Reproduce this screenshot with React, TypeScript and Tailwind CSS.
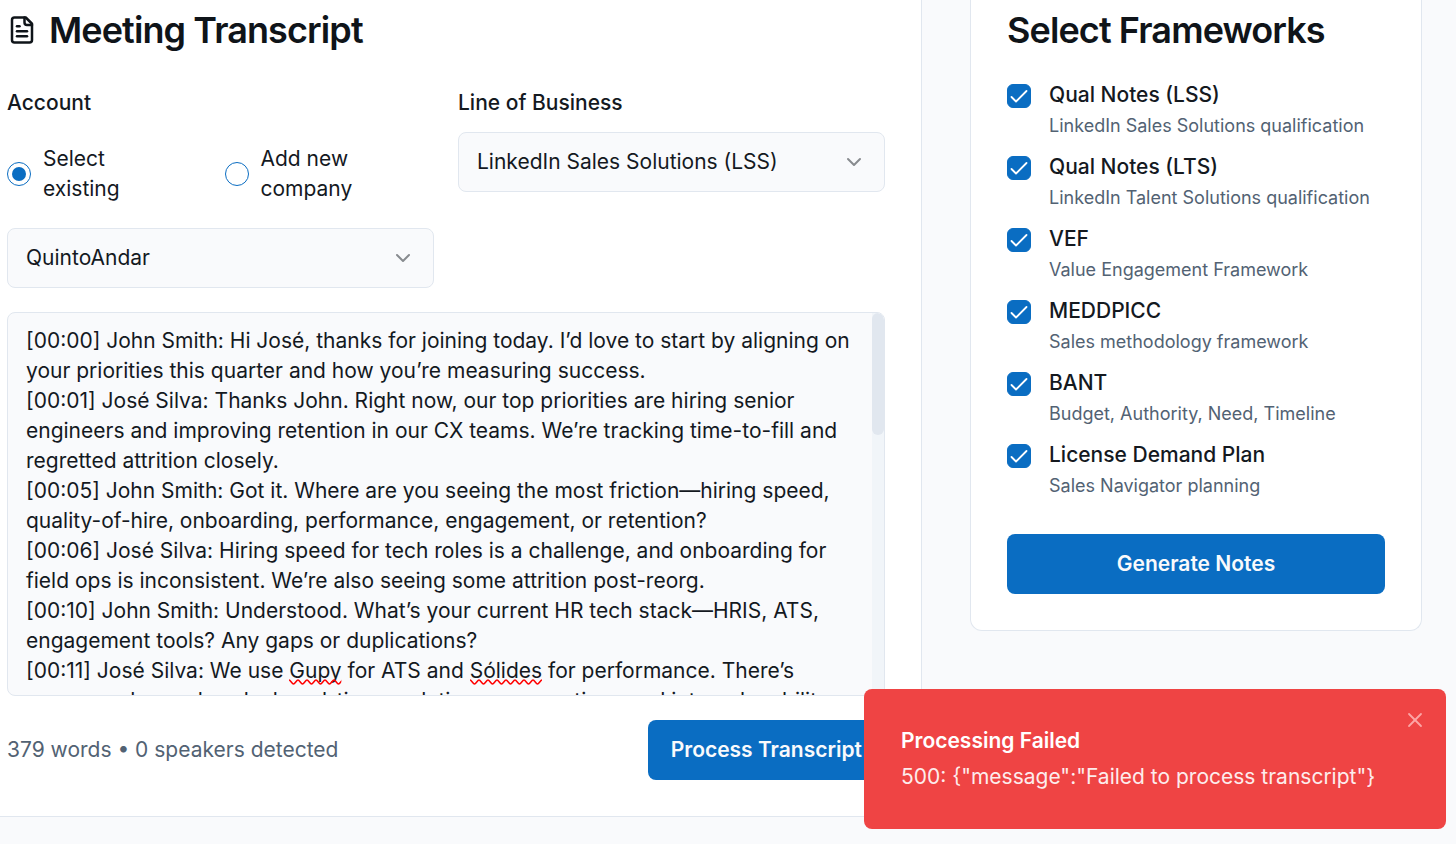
import React, { useEffect, useRef, useState } from "react";
import { ChevronDown, X } from "lucide-react";

const TRANSCRIPT = `[00:00] John Smith: Hi José, thanks for joining today. I’d love to start by aligning on your priorities this quarter and how you’re measuring success.
[00:01] José Silva: Thanks John. Right now, our top priorities are hiring senior engineers and improving retention in our CX teams. We’re tracking time-to-fill and regretted attrition closely.
[00:05] John Smith: Got it. Where are you seeing the most friction—hiring speed, quality-of-hire, onboarding, performance, engagement, or retention?
[00:06] José Silva: Hiring speed for tech roles is a challenge, and onboarding for field ops is inconsistent. We’re also seeing some attrition post-reorg.
[00:10] John Smith: Understood. What’s your current HR tech stack—HRIS, ATS, engagement tools? Any gaps or duplications?
[00:11] José Silva: We use Gupy for ATS and Sólides for performance. There’s some overlap and we lack real-time analytics on promotions and internal mobility.
[00:15] John Smith: How are you planning headcount for the next two quarters, and who signs off on new tools?
[00:16] José Silva: We expect about sixty engineering hires and one hundred in operations. Our CHRO and CFO approve anything above the annual budget, and procurement runs the review.
[00:20] John Smith: What would a successful outcome look like by the end of the year?
[00:21] José Silva: Time-to-fill under forty days for senior roles, regretted attrition below eight percent, and one shared view of skills across the company.
[00:25] John Smith: Which alternatives are you evaluating at the moment?
[00:26] José Silva: Two local vendors, and an internal build. We need a decision before the budget cycle closes in October, so the timeline is tight.
[00:30] John Smith: Who else should be part of the next conversation?
[00:31] José Silva: Our head of talent acquisition and the people analytics lead. They own the day-to-day process and the reporting.
[00:35] John Smith: I will send a summary with the next steps and a proposed agenda for the workshop.
[00:36] José Silva: Perfect, thank you. Let’s aim for next Tuesday morning.
[00:37] John Smith: Great, speak soon. Our team will prepare two short customer stories from the region before then.
[00:38] José Silva: That would help a lot.
[00:38] John Smith: Anything else you would like us to cover?
[00:39] José Silva: Pricing tiers, please.
[00:39] John Smith: Noted.
[00:40] José Silva: Thank you, John.
[00:40] John Smith: Thanks again.`;

const UNKNOWN_WORDS = /(Gupy|Sólides)/;

const FRAMEWORKS = [
  { id: "lss", name: "Qual Notes (LSS)", description: "LinkedIn Sales Solutions qualification" },
  { id: "lts", name: "Qual Notes (LTS)", description: "LinkedIn Talent Solutions qualification" },
  { id: "vef", name: "VEF", description: "Value Engagement Framework" },
  { id: "meddpicc", name: "MEDDPICC", description: "Sales methodology framework" },
  { id: "bant", name: "BANT", description: "Budget, Authority, Need, Timeline" },
  { id: "ldp", name: "License Demand Plan", description: "Sales Navigator planning" },
];

function FileIcon() {
  return (
    <svg viewBox="0 0 24 24" className="size-[30px] shrink-0" fill="none" stroke="currentColor" strokeWidth="2" strokeLinecap="round" strokeLinejoin="round" aria-hidden="true">
      <path d="M15 2H6a2 2 0 0 0-2 2v16a2 2 0 0 0 2 2h12a2 2 0 0 0 2-2V7Z" />
      <path d="M14 2v4a2 2 0 0 0 2 2h4" />
      <path d="M10 9H8" />
      <path d="M16 13H8" />
      <path d="M16 17H8" />
    </svg>
  );
}

function SelectBox({ id, label, options }: { id: string; label?: string; options: string[] }) {
  return (
    <div className="grid items-center">
      <select
        id={id}
        aria-label={label}
        className="col-start-1 row-start-1 h-15 w-full appearance-none rounded-lg border border-[#e1e7ef] bg-[#f9fafc] pr-12 pl-[18px] text-[#14191f]"
      >
        {options.map((option) => (
          <option key={option}>{option}</option>
        ))}
      </select>
      <ChevronDown className="pointer-events-none col-start-1 row-start-1 mr-[19px] size-6 justify-self-end text-[#888b8f]" aria-hidden="true" />
    </div>
  );
}

function AccountRadio({ label, defaultChecked }: { label: string; defaultChecked?: boolean }) {
  return (
    <label className="flex flex-1 items-center gap-3">
      <span className="grid place-items-center">
        <input
          type="radio"
          name="account"
          defaultChecked={defaultChecked}
          className="peer col-start-1 row-start-1 size-6 appearance-none rounded-full border border-[#0a6dc2]"
        />
        <span className="pointer-events-none col-start-1 row-start-1 hidden size-3.5 rounded-full bg-[#0a6dc2] peer-checked:block" />
      </span>
      <span className="w-26">{label}</span>
    </label>
  );
}

function Squiggle({ id }: { id: string }) {
  return (
    <svg className="visible absolute top-full left-0 -mt-1 h-[6px] w-full" aria-hidden="true">
      <defs>
        <pattern id={id} width="9" height="6" patternUnits="userSpaceOnUse">
          <path d="M-1.500 1.800 L0 1 C1.500 1 3 5 4.500 5 S7.500 1 9 1 L10.500 1.800" fill="none" stroke="#ff0000" strokeWidth="1.500" />
        </pattern>
      </defs>
      <rect width="100%" height="6" fill={`url(#${id})`} />
    </svg>
  );
}

function TranscriptBox() {
  const [text, setText] = useState(TRANSCRIPT);
  const [thumb, setThumb] = useState({ top: 0, height: 0 });
  const field = useRef<HTMLTextAreaElement>(null);
  const marks = useRef<HTMLDivElement>(null);

  const sync = () => {
    const el = field.current;
    if (!el) return;
    if (marks.current) marks.current.scrollTop = el.scrollTop;
    setThumb({ top: (el.scrollTop / el.scrollHeight) * 100, height: (el.clientHeight / el.scrollHeight) * 100 });
  };
  useEffect(sync, [text]);

  return (
    <div className="flex h-96 overflow-hidden rounded-lg border border-[#e1e7ef] bg-[#f9fafc]">
      <div className="grid min-w-0 flex-1 grid-rows-[minmax(0,1fr)]">
        <div ref={marks} aria-hidden="true" className="invisible col-start-1 row-start-1 overflow-hidden px-[18px] py-[13px] break-words whitespace-pre-wrap">
          {text.split(UNKNOWN_WORDS).map((part, i) =>
            i % 2 ? (
              <span key={i} className="relative">
                {part}
                <Squiggle id={`squiggle-${i}`} />
              </span>
            ) : (
              part
            ),
          )}
        </div>
        <textarea
          ref={field}
          aria-label="Meeting transcript"
          spellCheck={false}
          value={text}
          onChange={(e) => setText(e.target.value)}
          onScroll={sync}
          className="col-start-1 row-start-1 w-full resize-none overflow-y-auto bg-transparent px-[18px] py-[13px] outline-none [scrollbar-width:none]"
        />
      </div>
      <div aria-hidden="true" className="w-3 bg-[#f1f5f9]">
        <div className="relative rounded-md bg-[#e1e7ef]" style={{ top: `${thumb.top}%`, height: `${thumb.height}%` }} />
      </div>
    </div>
  );
}

function Toast() {
  const [open, setOpen] = useState(true);
  if (!open) return null;
  return (
    <div role="alert" className="fixed right-2.5 bottom-[15px] flex w-[582px] items-start justify-between rounded-lg bg-[#ef4444] pt-4 pr-4 pb-[37px] pl-[37px] text-white">
      <div className="flex flex-col gap-1.5 pt-[21px]">
        <p className="font-semibold">Processing Failed</p>
        <p className="opacity-90">{'500: {"message":"Failed to process transcript"}'}</p>
      </div>
      <button type="button" aria-label="Close" onClick={() => setOpen(false)} className="p-[3px] text-[#fca5a5]">
        <X className="size-6" strokeWidth={1.8} />
      </button>
    </div>
  );
}

export default function App() {
  return (
    <div className="min-h-screen overflow-hidden bg-[#f9fafc] font-['Inter',sans-serif] text-[21px] leading-[30px] text-[#14191f]">
      <div className="flex items-start gap-12 pr-[34px]">
        <section className="min-w-0 flex-1 border-r border-b border-[#e1e7ef] bg-white pt-1.5 pr-9 pb-9 pl-[7px]">
          <h2 className="flex items-center gap-3 text-4xl leading-12 font-semibold tracking-tight text-[#0f1419]">
            <FileIcon />
            Meeting Transcript
          </h2>
          <form className="mt-9 flex flex-col gap-6" onSubmit={(e) => e.preventDefault()}>
            <div className="grid grid-cols-2 items-start gap-6">
              <fieldset className="flex min-w-0 flex-col">
                <legend className="leading-[26px] font-medium">Account</legend>
                <div className="mt-7 flex gap-2">
                  <AccountRadio label="Select existing" defaultChecked />
                  <AccountRadio label="Add new company" />
                </div>
                <div className="mt-6">
                  <SelectBox id="company" label="Company" options={["QuintoAndar"]} />
                </div>
              </fieldset>
              <div className="flex flex-col gap-4">
                <label htmlFor="lob" className="leading-[26px] font-medium">
                  Line of Business
                </label>
                <SelectBox id="lob" options={["LinkedIn Sales Solutions (LSS)"]} />
              </div>
            </div>
            <TranscriptBox />
            <div className="flex items-center justify-between">
              <p className="text-[#526273]">379 words • 0 speakers detected</p>
              <button type="submit" className="h-15 rounded-lg bg-[#0a6dc2] px-[23px] font-semibold text-[#f9fafc]">
                Process Transcript
              </button>
            </div>
          </form>
        </section>

        <aside className="w-[452px] shrink-0 rounded-b-xl border border-t-0 border-[#e1e7ef] bg-white px-9 pt-1.5 pb-9">
          <h2 className="text-4xl leading-12 font-semibold tracking-tight text-[#0f1419]">Select Frameworks</h2>
          <ul className="mt-[30px] flex flex-col gap-[18px]">
            {FRAMEWORKS.map((f) => (
              <li key={f.id} className="flex items-start gap-[18px]">
                <span className="grid place-items-center">
                  <input
                    id={f.id}
                    type="checkbox"
                    defaultChecked
                    className="peer col-start-1 row-start-1 size-6 appearance-none rounded-md border border-[#0a6dc2] checked:bg-[#0a6dc2]"
                  />
                  <svg viewBox="0 0 24 24" className="pointer-events-none col-start-1 row-start-1 hidden size-6 peer-checked:block" fill="none" stroke="#fff" strokeWidth="1.8" strokeLinecap="round" strokeLinejoin="round" aria-hidden="true">
                    <path d="M19.500 7 9 17.500l-4.500-4.500" />
                  </svg>
                </span>
                <label htmlFor={f.id} className="flex flex-col gap-[9px]">
                  <span className="leading-[21px] font-medium">{f.name}</span>
                  <span className="text-lg leading-6 text-[#526273]">{f.description}</span>
                </label>
              </li>
            ))}
          </ul>
          <button type="button" className="mt-9 h-15 w-full rounded-lg bg-[#0a6dc2] font-semibold text-[#f9fafc]">
            Generate Notes
          </button>
        </aside>
      </div>
      <Toast />
    </div>
  );
}
